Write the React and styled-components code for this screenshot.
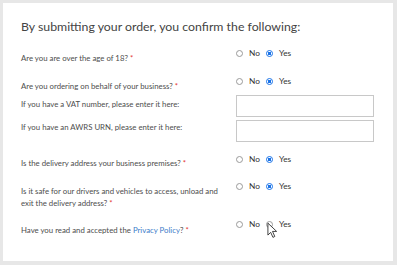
import React from 'react'
import styled, { createGlobalStyle } from 'styled-components'

const GlobalStyle = createGlobalStyle`
	html, body {
		margin: 0;
		padding: 0;
		background: #e7e7e7;
	}
	body {
		font-family: Lato, 'Liberation Sans', sans-serif;
	}
`

const App = () => {
	return (
		<>
			<GlobalStyle />
			<Page>
				<Card>
					<Title>By submitting your order, you confirm the following:</Title>
					<Form>
						<Row>
							<Label $pad={5}>
								Are you are over the age of 18? <Required>*</Required>
							</Label>
							<RadioGroup name='age' value='yes' />
						</Row>
						<Group>
							<Row>
								<Label $pad={5}>
									Are you ordering on behalf of your business? <Required>*</Required>
								</Label>
								<RadioGroup name='business' value='yes' />
							</Row>
							<Row>
								<Label $pad={3}>If you have a VAT number, please enter it here:</Label>
								<Input type='text' />
							</Row>
							<Row>
								<Label $pad={1}>If you have an AWRS URN, please enter it here:</Label>
								<Input type='text' />
							</Row>
						</Group>
						<Row>
							<Label $pad={4}>
								Is the delivery address your business premises? <Required>*</Required>
							</Label>
							<RadioGroup name='premises' value='yes' />
						</Row>
						<Row>
							<Label $pad={5}>
								Is it safe for our drivers and vehicles to access, unload and exit the delivery address?{' '}
								<Required>*</Required>
							</Label>
							<RadioGroup name='safe' value='yes' />
						</Row>
						<Row $mt={-2}>
							<Label $pad={6}>
								Have you read and accepted the <Link href='#'>Privacy Policy</Link>? <Required>*</Required>
							</Label>
							<CursorWrap>
								<RadioGroup name='privacy' value='' />
								<Cursor viewBox='0 0 12 18' width='11' height='17'>
									<path
										d='M1 1 L1 14 L4 11 L6.5 16.5 L8.5 15.5 L6 10 L10.5 10 Z'
										fill='#fff'
										stroke='#333'
										strokeWidth='1'
										strokeLinejoin='round'
									/>
								</Cursor>
							</CursorWrap>
						</Row>
					</Form>
				</Card>
			</Page>
		</>
	)
}

export default App

const RadioGroup = ({ name, value }) => (
	<Radios>
		<Option>
			<Radio type='radio' name={name} defaultChecked={value === 'no'} />
			<OptionText>No</OptionText>
		</Option>
		<Option>
			<Radio type='radio' name={name} defaultChecked={value === 'yes'} />
			<OptionText>Yes</OptionText>
		</Option>
	</Radios>
)

const Page = styled.div`
	width: 397px;
	height: 265px;
	padding: 3px 4px 4px 3px;
	box-sizing: border-box;
`
const Card = styled.div`
	width: 390px;
	height: 258px;
	background: #fff;
	box-sizing: border-box;
	padding: 15px 18px 0 18px;
`
const Title = styled.h2`
	margin: 0;
	font-size: 12.3px;
	line-height: 18px;
	font-weight: 400;
	color: #444;
`
const Form = styled.div`
	display: flex;
	flex-direction: column;
	gap: 11px;
	margin-top: 11px;
`
const Group = styled.div`
	display: flex;
	flex-direction: column;
	gap: 3px;
`
const Row = styled.div`
	display: grid;
	grid-template-columns: 215px 138px;
	align-items: start;
	margin-top: ${({ $mt }) => $mt || 0}px;
`
const Label = styled.div`
	padding-top: ${({ $pad }) => $pad}px;
	padding-right: 14px;
	font-size: 7.8px;
	line-height: 12px;
	color: #4d4d4d;
`
const Required = styled.span`
	color: #e53935;
`
const Link = styled.a`
	color: #3d7cc9;
	text-decoration: none;
`
const Input = styled.input`
	width: 138px;
	height: 22px;
	box-sizing: border-box;
	margin: 0;
	border: 1px solid #c8c8c8;
	outline: none;
	background: #fff;
`
const Radios = styled.div`
	display: flex;
	align-items: center;
	gap: 6px;
	height: 12px;
`
const Option = styled.label`
	display: flex;
	align-items: center;
	gap: 6px;
`
const Radio = styled.input`
	appearance: none;
	margin: 0;
	width: 7px;
	height: 7px;
	border-radius: 50%;
	border: 1px solid #9a9a9a;
	box-sizing: border-box;
	background: #fff;

	&:checked {
		border-color: #1a73e8;
		background: radial-gradient(circle, #1a73e8 0 1.6px, #fff 2px);
	}
`
const OptionText = styled.span`
	font-size: 8.3px;
	line-height: 12px;
	color: #333;
`
const CursorWrap = styled.div`
	position: relative;
`
const Cursor = styled.svg`
	position: absolute;
	left: 31px;
	top: 4px;
`
